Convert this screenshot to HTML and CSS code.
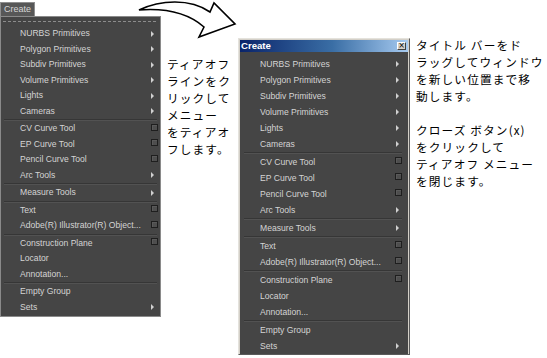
FILE: index.html
```html
<!DOCTYPE html>
<html lang="ja">
<head>
<meta charset="utf-8">
<title>Tear-off menu</title>
<link rel="stylesheet" href="styles.css">
</head>
<body>
<div class="page">
  <div class="col-left">
    <div class="tab">Create</div>
    <div class="menu">
      <div class="tearoff"></div>
      <div class="item sub">NURBS Primitives</div>
      <div class="item sub">Polygon Primitives</div>
      <div class="item sub">Subdiv Primitives</div>
      <div class="item sub">Volume Primitives</div>
      <div class="item sub">Lights</div>
      <div class="item sub">Cameras</div>
      <div class="sep"></div>
      <div class="item opt">CV Curve Tool</div>
      <div class="item opt">EP Curve Tool</div>
      <div class="item opt">Pencil Curve Tool</div>
      <div class="item sub">Arc Tools</div>
      <div class="sep"></div>
      <div class="item sub">Measure Tools</div>
      <div class="sep"></div>
      <div class="item opt">Text</div>
      <div class="item opt">Adobe(R) Illustrator(R) Object...</div>
      <div class="sep"></div>
      <div class="item opt">Construction Plane</div>
      <div class="item">Locator</div>
      <div class="item">Annotation...</div>
      <div class="sep"></div>
      <div class="item">Empty Group</div>
      <div class="item sub">Sets</div>
    </div>
  </div>

  <div class="note note-left">
    <div class="line">ティアオフ</div>
    <div class="line">ラインをク</div>
    <div class="line">リックして</div>
    <div class="line">メニュー</div>
    <div class="line">をティアオ</div>
    <div class="line">フします。</div>
  </div>

  <div class="window">
    <div class="titlebar"><span class="title">Create</span><span class="close">×</span></div>
    <div class="wbody">
      <div class="item sub">NURBS Primitives</div>
      <div class="item sub">Polygon Primitives</div>
      <div class="item sub">Subdiv Primitives</div>
      <div class="item sub">Volume Primitives</div>
      <div class="item sub">Lights</div>
      <div class="item sub">Cameras</div>
      <div class="sep"></div>
      <div class="item opt">CV Curve Tool</div>
      <div class="item opt">EP Curve Tool</div>
      <div class="item opt">Pencil Curve Tool</div>
      <div class="item sub">Arc Tools</div>
      <div class="sep"></div>
      <div class="item sub">Measure Tools</div>
      <div class="sep"></div>
      <div class="item opt">Text</div>
      <div class="item opt">Adobe(R) Illustrator(R) Object...</div>
      <div class="sep"></div>
      <div class="item opt">Construction Plane</div>
      <div class="item">Locator</div>
      <div class="item">Annotation...</div>
      <div class="sep"></div>
      <div class="item">Empty Group</div>
      <div class="item sub">Sets</div>
    </div>
  </div>

  <div class="note note-right">
    <div class="line">タイトル バーをド</div>
    <div class="line">ラッグしてウィンドウ</div>
    <div class="line">を新しい位置まで移</div>
    <div class="line">動します。</div>
    <div class="gap"></div>
    <div class="line">クローズ ボタン(x)</div>
    <div class="line">をクリックして</div>
    <div class="line">ティアオフ メニュー</div>
    <div class="line">を閉じます。</div>
  </div>

  <svg class="arrow" width="547" height="60" viewBox="0 0 547 60">
    <path d="M139,10 C160,0 190,-2 210,12 L214,3 L235,24 L199,37 L204,27 C188,13 165,8 139,10 Z" fill="#fff" stroke="#000" stroke-width="1.6" stroke-linejoin="miter"/>
  </svg>
</div>
</body>
</html>
```

FILE: styles.css
```css
html, body {
  margin: 0;
  padding: 0;
  background: #ffffff;
}

.page {
  position: relative;
  width: 547px;
  height: 358px;
  display: flex;
  align-items: flex-start;
  overflow: hidden;
}

/* ---------- left (docked) menu ---------- */
.col-left {
  width: 161px;
  margin-top: 2px;
  flex: none;
}

.tab {
  box-sizing: border-box;
  width: 35px;
  height: 14px;
  border: 1px solid #8e8e8e;
  border-bottom: none;
  background: #575757;
  color: #d6d6d6;
  font: 9px/13px "Liberation Sans", Arial, sans-serif;
  padding-left: 3px;
}

.menu {
  box-sizing: border-box;
  width: 161px;
  border: 1px solid #8a8a8a;
  background: #454545;
  padding-bottom: 1px;
}

.tearoff {
  height: 9.2px;
  margin: 0 2px;
  background-image: repeating-linear-gradient(90deg, #8c8c8c 0 3px, transparent 3px 5px);
  background-size: 100% 1px;
  background-position: 0 4px;
  background-repeat: no-repeat;
}

.item {
  position: relative;
  height: 15.5px;
  line-height: 15.5px;
  padding-left: 19px;
  font-family: "Liberation Sans", Arial, sans-serif;
  font-size: 8.6px;
  color: #d4d4d4;
  white-space: nowrap;
}

.sub::after {
  content: "";
  position: absolute;
  right: 6px;
  top: 50%;
  margin-top: -3px;
  border-left: 3px solid #d0d0d0;
  border-top: 3px solid transparent;
  border-bottom: 3px solid transparent;
}

.opt::after {
  content: "";
  position: absolute;
  right: 2px;
  top: 50%;
  margin-top: -5px;
  width: 5px;
  height: 5px;
  border: 1px solid #1e1e1e;
  background: #4e4e4e;
  box-shadow: inset 1px 1px 0 #5a5a5a;
}

.sep {
  height: 1px;
  margin: 0 3px;
  background: #363636;
  border-bottom: 1px solid #525252;
}

/* ---------- notes ---------- */
.note {
  font-family: "Noto Sans CJK JP", "Noto Sans", sans-serif;
  font-size: 11.7px;
  letter-spacing: 1.1px;
  color: #000;
  white-space: nowrap;
}

.note .line {
  height: 17px;
  line-height: 17px;
}

.note .gap {
  height: 17px;
}

.note-left {
  width: 71px;
  margin-left: 6px;
  margin-top: 55px;
  flex: none;
}

.note-right {
  margin-left: 6px;
  margin-top: 36px;
}

/* ---------- torn-off window ---------- */
.window {
  box-sizing: border-box;
  width: 172px;
  margin-top: 38px;
  flex: none;
  border: 1px solid;
  border-color: #e4e2dc #5a5a5a #5a5a5a #e4e2dc;
  background: #d4d0c8;
  padding: 1px 1px 0 1px;
}

.titlebar {
  height: 12px;
  display: flex;
  align-items: center;
  justify-content: space-between;
  background: linear-gradient(90deg, #0a246a 0%, #3a6ea5 55%, #a6caf0 100%);
  padding: 0 2px 0 1px;
}

.title {
  font-family: "Liberation Sans", Arial, sans-serif;
  font-weight: bold;
  font-size: 9.6px;
  line-height: 12px;
  color: #ffffff;
}

.close {
  box-sizing: border-box;
  width: 9px;
  height: 8px;
  background: #d4d0c8;
  border: 1px solid;
  border-color: #ffffff #404040 #404040 #ffffff;
  font-family: "DejaVu Sans", sans-serif;
  font-size: 8px;
  line-height: 6px;
  text-align: center;
  color: #000;
}

.wbody {
  background: #454545;
  padding: 4px 0 0 0;
}

.wbody .item {
  height: 16px;
  line-height: 16px;
  padding-left: 20px;
}

.wbody .sub::after {
  right: 9px;
}

.wbody .opt::after {
  right: 6px;
}

.wbody .sep {
  margin: 0 6px 0 4px;
}

/* ---------- arrow overlay ---------- */
.arrow {
  position: absolute;
  left: 0;
  top: 0;
  pointer-events: none;
}
```
